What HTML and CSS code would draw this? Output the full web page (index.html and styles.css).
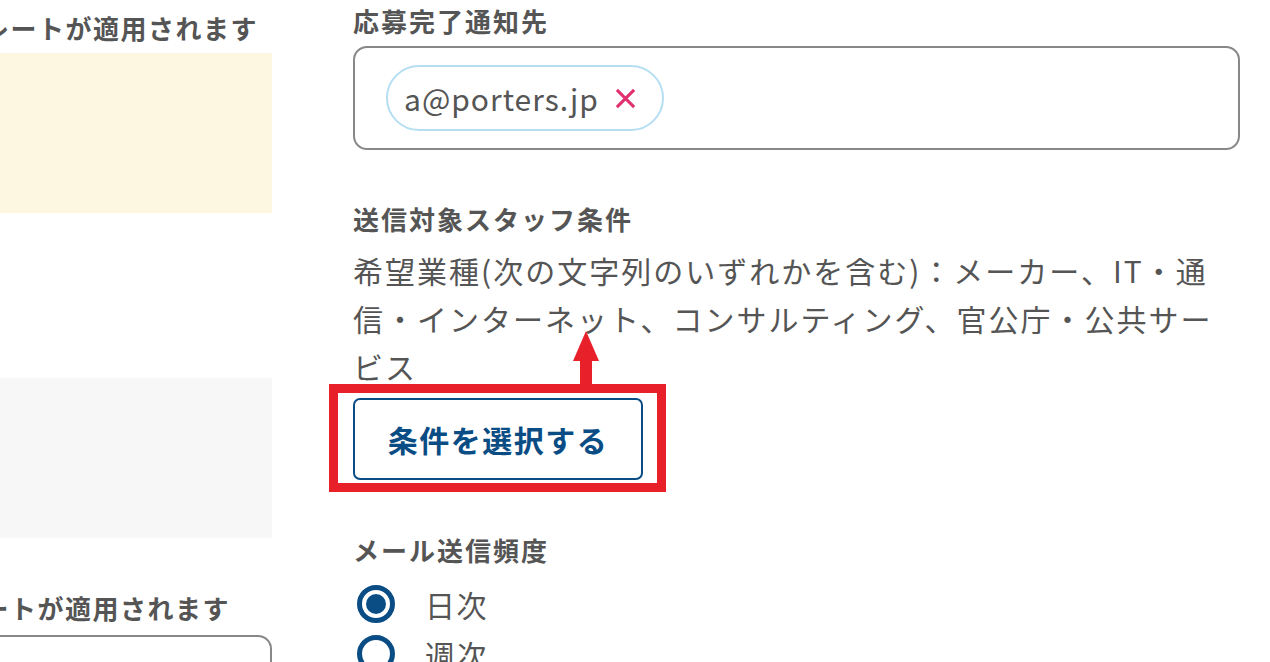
FILE: index.html
```html
<!DOCTYPE html>
<html lang="ja">
<head>
<meta charset="utf-8">
<link rel="stylesheet" href="styles.css">
</head>
<body>
<div class="page">
  <div class="left">
    <h3 class="lhead lhead1"><span>選択したテンプレートが適用されます</span></h3>
    <div class="box yellow"></div>
    <div class="box grey"></div>
    <h3 class="lhead lhead2"><span>選択したテンプレートが適用されます</span></h3>
    <div class="lfield"></div>
  </div>
  <div class="right">
    <h3 class="label">応募完了通知先</h3>
    <div class="field">
      <span class="chip">a@porters.jp<svg class="x" viewBox="0 0 24 24" width="24" height="24"><path d="M3 3L21 21M21 3L3 21" stroke="#e0306f" stroke-width="3.2" fill="none"/></svg></span>
    </div>
    <h3 class="label label2">送信対象スタッフ条件</h3>
    <p class="cond">希望業種(次の文字列のいずれかを含む)：メーカー、IT・通信・インターネット、コンサルティング、官公庁・公共サービス</p>
    <div class="annot">
      <button class="btn">条件を選択する</button>
      <svg class="arrow" viewBox="0 0 28 54" width="28" height="54"><polygon points="14,0 27,30 20,30 20,54 8,54 8,30 1,30" fill="#e8202a"/></svg>
    </div>
    <h3 class="label label3">メール送信頻度</h3>
    <div class="radios">
      <label class="radio"><span class="dot on"></span><span class="rtext">日次</span></label>
      <label class="radio"><span class="dot"></span><span class="rtext">週次</span></label>
    </div>
  </div>
</div>
</body>
</html>
```
FILE: styles.css
```css
* { box-sizing: border-box; }
html, body { margin: 0; padding: 0; background: #fff; }
body {
  font-family: "Noto Sans CJK JP", "Noto Sans", sans-serif;
  color: #555;
  overflow: hidden;
  height: 662px;
}
.page {
  display: flex;
  gap: 81px;
  width: 1270px;
  height: 662px;
}
.left {
  width: 272px;
  flex: none;
  overflow: hidden;
}
.lhead {
  margin: 0;
  font-size: 26px;
  font-weight: 700;
  letter-spacing: 1.5px;
  white-space: nowrap;
  line-height: 36px;
  display: flex;
  justify-content: flex-end;
}
.lhead span { flex: none; }
.lhead1 { margin-top: 10px; padding-right: 14px; }
.box { height: 160px; }
.yellow { background: #fdf6e1; margin-top: 7px; }
.grey { background: #f7f7f7; margin-top: 165px; }
.lhead2 { margin-top: 52px; padding-right: 42px; }
.lfield {
  margin-top: 9px;
  height: 100px;
  border: 2px solid #888;
  border-radius: 14px;
  margin-left: -20px;
}
.right {
  width: 887px;
  flex: none;
  position: relative;
}
.label {
  margin: 0;
  font-size: 26px;
  font-weight: 700;
  letter-spacing: 2px;
  line-height: 36px;
}
.right > .label:first-child { margin-top: 3px; }
.field {
  margin-top: 7px;
  height: 104px;
  border: 2px solid #888;
  border-radius: 14px;
  padding: 17px 31px;
}
.chip {
  display: inline-flex;
  align-items: center;
  height: 66px;
  padding: 0 25px 0 16px;
  border: 2px solid #b5def2;
  border-radius: 33px;
  font-size: 30px;
  letter-spacing: 1px;
  color: #555;
}
.x { margin-left: 15px; width: 23px; height: 23px; }
.label2 { margin-top: 51px; }
.cond {
  margin: 9px 0 0;
  font-size: 30px;
  line-height: 48px;
  letter-spacing: 2px;
  width: 872px;
}
.annot {
  position: relative;
  display: inline-block;
  margin-left: -24px;
  margin-top: -6px;
  border: 9px solid #e8202a;
  padding: 5px 14px 3px 15px;
}
.btn {
  display: block;
  width: 290px;
  height: 82px;
  border: 2px solid #0a4d85;
  border-radius: 7px;
  background: #fff;
  color: #0a4d85;
  font-family: "Noto Sans CJK JP", sans-serif;
  font-size: 30px;
  font-weight: 700;
  letter-spacing: 1.5px;
  padding: 0;
}
.arrow {
  position: absolute;
  left: 234px;
  top: -62px;
}
.label3 { margin-top: 40px; }
.radios { margin-top: 11px; }
.radio {
  display: flex;
  align-items: center;
  height: 50px;
  margin-left: 4px;
}
.dot {
  width: 38px;
  height: 38px;
  border-radius: 50%;
  border: 5px solid #0a4d85;
  position: relative;
  flex: none;
}
.dot.on::after {
  content: "";
  position: absolute;
  left: 4px; top: 4px;
  width: 20px; height: 20px;
  border-radius: 50%;
  background: #0a4d85;
}
.rtext {
  margin-left: 30px;
  font-size: 30px;
  letter-spacing: 1.5px;
}
```
